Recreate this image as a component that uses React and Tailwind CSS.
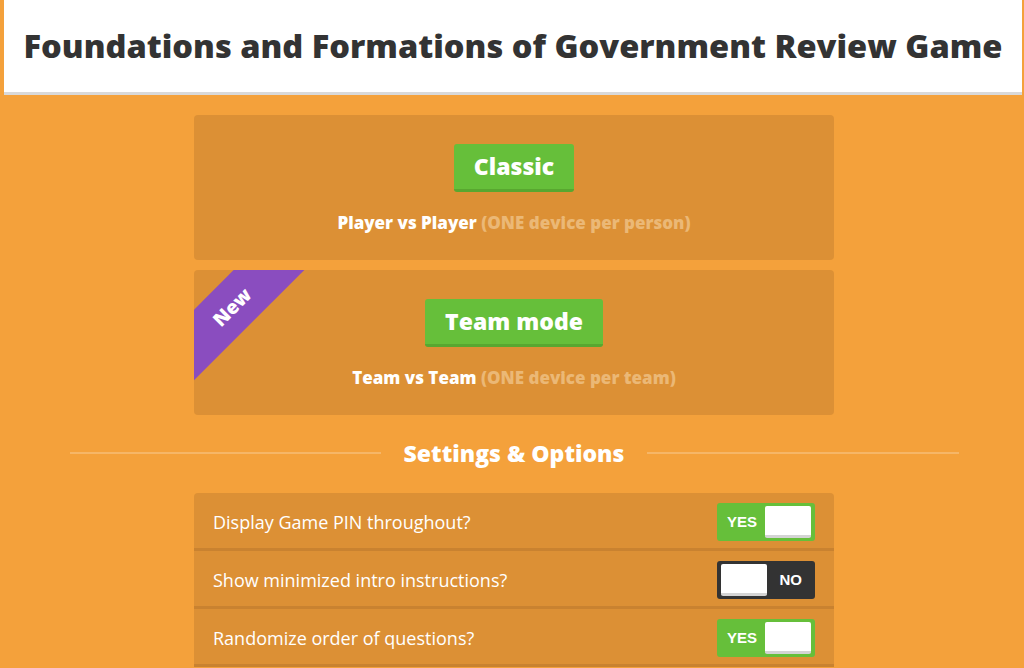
import React, { useState } from 'react'

const ModeCard = ({ label, lead, note, isNew }) => (
  <div className="relative overflow-hidden h-[145px] rounded-[4px] bg-[#dc9035] flex flex-col items-center pt-[29px]">
    {isNew && (
      <div className="absolute left-[-62px] top-[12px] w-[200px] h-[50px] bg-[#8a4dbf] -rotate-45 flex items-center justify-center">
        <span className="text-white font-extrabold text-[19px]">New</span>
      </div>
    )}
    <button className="h-[48px] px-[20px] rounded-[3px] bg-[#66bf3a] border-b-[3px] border-[#58a730] text-white font-extrabold text-[23px] leading-none">
      {label}
    </button>
    <p className="mt-[21px] h-[20px] text-[17px] font-extrabold leading-[20px] text-white">
      {lead} <span className="text-[#ebb876]">{note}</span>
    </p>
  </div>
)

const Toggle = ({ on, onClick }) => (
  <div
    onClick={onClick}
    className={`w-[98px] h-[38px] rounded-[3px] flex items-center justify-between cursor-pointer ${on ? 'bg-[#66bf3a] pl-[10px] pr-[4px]' : 'bg-[#333333] pl-[4px] pr-[13px]'}`}
    style={{ fontFamily: '"Liberation Sans", Arial, sans-serif' }}
  >
    {on && <span className="text-white font-bold text-[15px]">YES</span>}
    <div className="w-[46px] h-[32px] rounded-[2px] bg-white border-b-[3px] border-[#d4d4d4]" />
    {!on && <span className="text-white font-bold text-[15px]">NO</span>}
  </div>
)

export default function App() {
  const [settings, setSettings] = useState([
    { id: 1, label: 'Display Game PIN throughout?', on: true },
    { id: 2, label: 'Show minimized intro instructions?', on: false },
    { id: 3, label: 'Randomize order of questions?', on: true },
  ])

  const flip = (id) =>
    setSettings(settings.map((s) => (s.id === id ? { ...s, on: !s.on } : s)))

  return (
    <div
      className="min-h-screen bg-[#f4a13b] pb-10"
      style={{ fontFamily: '"Open Sans", sans-serif' }}
    >
      <header className="ml-[4px] mr-[2px] h-[95px] bg-white border-b-[3px] border-[#d9d9d9] flex items-center justify-center">
        <h1 className="text-[32.6px] font-extrabold text-[#333333]">
          Foundations and Formations of Government Review Game
        </h1>
      </header>

      <div className="flex justify-center pl-[4px]">
        <div className="w-[640px] mt-[20px] flex flex-col gap-[10px]">
          <ModeCard label="Classic" lead="Player vs Player" note="(ONE device per person)" />
          <ModeCard label="Team mode" lead="Team vs Team" note="(ONE device per team)" isNew />
        </div>
      </div>

      <div className="flex justify-center pl-[4px] mt-[23px]">
        <div className="w-[889px] flex items-center gap-[23px] h-[30px]">
          <div className="flex-1 h-[2px] bg-[#f6b667]" />
          <h2 className="text-white font-extrabold text-[23px]">Settings &amp; Options</h2>
          <div className="flex-1 h-[2px] bg-[#f6b667]" />
        </div>
      </div>

      <div className="flex justify-center pl-[4px] mt-[25px]">
        <div className="w-[640px] flex flex-col">
          {settings.map((s) => (
            <div
              key={s.id}
              className="h-[58px] pt-[3px] bg-[#dc9035] border-b-[3px] border-[#c98230] flex items-center justify-between pl-[19px] pr-[19px] first:rounded-t-[4px]"
            >
              <span className="text-white text-[18px]">{s.label}</span>
              <Toggle on={s.on} onClick={() => flip(s.id)} />
            </div>
          ))}
        </div>
      </div>
    </div>
  )
}
